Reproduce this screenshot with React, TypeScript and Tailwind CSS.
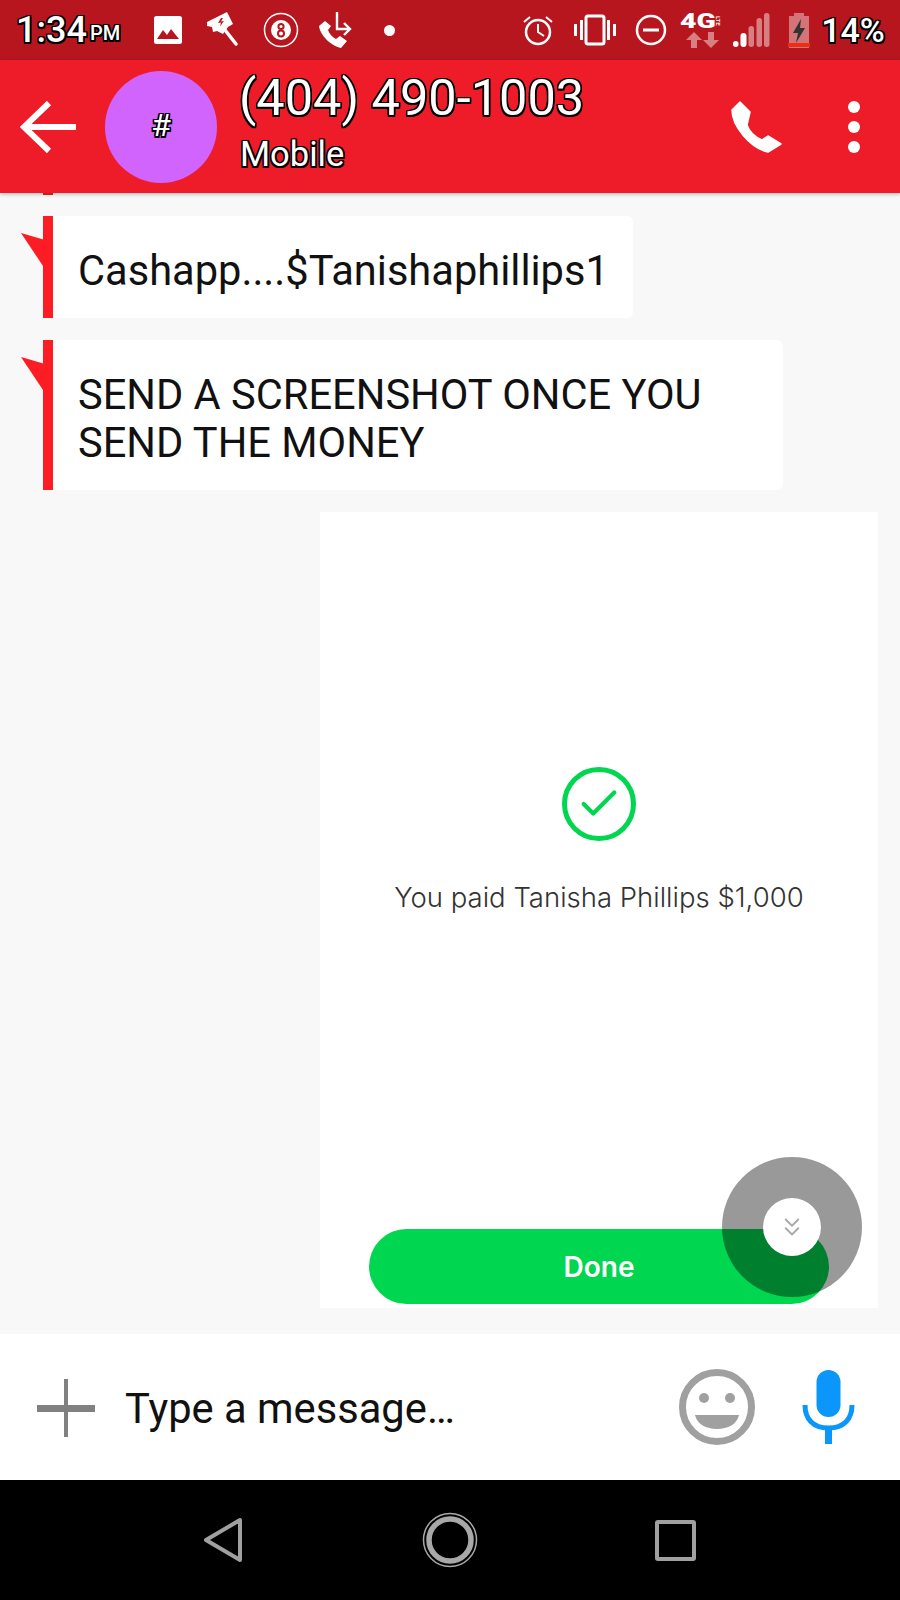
import { Check, ChevronsDown } from "lucide-react";

const outlined =
  "[text-shadow:-1.5px_-1.5px_0_#000,1.5px_-1.5px_0_#000,-1.5px_1.5px_0_#000,1.5px_1.5px_0_#000,0_1.5px_0_#000,0_-1.5px_0_#000,1.5px_0_0_#000,-1.5px_0_0_#000]";

function StatusBar() {
  return (
    <div className="flex h-[60px] items-center bg-[#b8161f] pl-4 text-white">
      <span className={`text-[36px] leading-none font-medium ${outlined}`}>1:34</span>
      <span className={`ml-[3px] mt-[6px] text-[20px] leading-none font-medium ${outlined}`}>PM</span>

      {/* gallery */}
      <svg className="ml-[33px]" width="30" height="30" viewBox="0 0 30 30">
        <rect x="1" y="1" width="28" height="28" rx="2.5" fill="#fff" />
        <path d="M4 24l6-9 4 5 4-6 8 10z" fill="#b8161f" />
      </svg>
      {/* hammer */}
      <svg className="ml-[23px]" width="34" height="36" viewBox="0 0 34 36">
        <path d="M1 10L21 0l6 12-5 3-5 7-6-3-4 1-1-5-5-1z" fill="#fff" />
        <path d="M15 6l-3 5 3-.5-1 4 4-5.500-3 .5 2-3.500z" fill="#b8161f" />
        <path d="M19 18l11 14" stroke="#fff" strokeWidth="3.500" strokeLinecap="round" />
      </svg>
      {/* 8 ball */}
      <svg className="ml-[23px]" width="36" height="36" viewBox="0 0 36 36">
        <circle cx="18" cy="18" r="16.500" fill="none" stroke="#fff" strokeWidth="1.500" />
        <circle cx="18" cy="18" r="10" fill="#fff" />
        <circle cx="18" cy="14.500" r="2.600" fill="none" stroke="#b8161f" strokeWidth="2" />
        <circle cx="18" cy="21.500" r="3" fill="none" stroke="#b8161f" strokeWidth="2" />
      </svg>
      {/* forwarded call */}
      <svg className="ml-[18px]" width="36" height="38" viewBox="0 0 36 38">
        <path d="M8 10L2 15c1 9 12 20 22 22l6-7-7-5-4 3c-4-2-7-6-8-9l3-4z" fill="#fff" />
        <path d="M20 1v17h13M27 12l6 6-6 6" fill="none" stroke="#fff" strokeWidth="2.400" />
      </svg>
      <div className="ml-[31px] h-[11px] w-[11px] rounded-full bg-white" />

      {/* alarm */}
      <svg className="ml-[127px]" width="32" height="32" viewBox="0 0 32 32" fill="none" stroke="#fff" strokeWidth="2.500">
        <circle cx="16" cy="18" r="12" />
        <path d="M16 10v8l6 4M2 8l6-5M30 8l-6-5" strokeWidth="2" />
      </svg>
      {/* vibrate */}
      <svg className="ml-[20px]" width="42" height="32" viewBox="0 0 42 32" fill="#fff">
        <rect x="12" y="2" width="18" height="28" rx="2" fill="none" stroke="#fff" strokeWidth="3" />
        <rect x="0" y="10" width="3" height="12" />
        <rect x="6" y="6" width="3" height="20" />
        <rect x="33" y="6" width="3" height="20" />
        <rect x="39" y="10" width="3" height="12" />
      </svg>
      {/* do not disturb */}
      <svg className="ml-[19px]" width="32" height="32" viewBox="0 0 32 32" fill="none" stroke="#fff">
        <circle cx="16" cy="16" r="14" strokeWidth="2.500" />
        <path d="M8 16h16" strokeWidth="3" />
      </svg>

      {/* network */}
      <div className="ml-[13px] flex h-[36px] w-[46px] flex-col">
        <div className="flex h-[17px] items-center justify-between">
          <span className="origin-left scale-x-[1.35] text-[21px] leading-[16px] font-black">4G</span>
          <span className="text-[6px] leading-[15px] font-bold [writing-mode:vertical-rl]">LTE</span>
        </div>
        <svg className="mt-[3px] ml-[6px]" width="33" height="16" viewBox="0 0 33 16" fill="#fff" fillOpacity="0.45">
          <path d="M8 0l8 8h-5v8H5V8H0zM25 16l8-8h-5V0h-6v8h-5z" />
        </svg>
      </div>
      {/* signal */}
      <svg className="ml-[7px]" width="37" height="36" viewBox="0 0 37 36" fill="#fff">
        <rect x="0" y="29" width="5.500" height="6" rx="2.700" />
        <rect x="7.500" y="21" width="6" height="14" rx="3" />
        <rect x="15.500" y="14" width="5.500" height="21" rx="2.700" fillOpacity="0.45" />
        <rect x="23.500" y="6" width="5.500" height="29" rx="2.700" fillOpacity="0.45" />
        <rect x="31" y="1" width="5.500" height="34" rx="2.700" fillOpacity="0.45" />
      </svg>
      {/* battery */}
      <svg className="ml-[17px]" width="24" height="36" viewBox="0 0 24 36">
        <path d="M7 1h10v3h5v32H2V4h5z" fill="#fff" fillOpacity="0.4" />
        <path d="M14 7L6 21h5l-2 10 9-15h-5z" fill="#333" />
        <rect x="1" y="31" width="22" height="4" fill="#ee2d12" />
      </svg>
      <span className={`ml-[10px] text-[34px] leading-none font-medium ${outlined}`}>14%</span>
    </div>
  );
}

function Header() {
  return (
    <div className="relative z-10 flex h-[133px] items-center bg-[#ed1c28] text-white shadow-[0_1px_4px_rgba(0,0,0,0.3)]">
      <svg className="ml-[20px]" width="56" height="52" viewBox="0 0 56 52" fill="none" stroke="#fff" strokeWidth="6">
        <path d="M56 26H4M29 2L4 26l25 24" />
      </svg>
      <div className="ml-[29px] flex h-[112px] w-[112px] items-center justify-center rounded-full bg-[#d164fd]">
        <span className={`mb-[3px] text-[32px] leading-none ${outlined}`}>#</span>
      </div>
      <div className="mb-[6px] ml-[22px] flex flex-col">
        <span className={`text-[50.500px] leading-[60px] ${outlined}`}>(404) 490-1003</span>
        <span className={`ml-[1px] text-[34.500px] leading-[52px] ${outlined}`}>Mobile</span>
      </div>
      <svg className="ml-auto" width="54" height="54" viewBox="0 0 54 54" fill="#fff">
        <path d="M10 2L2 10c0 16 18 38 36 42l13-8-13-8-6 4c-7-3-13-9-15-15l3-13z" strokeLinejoin="round" stroke="#fff" strokeWidth="1.500" />
      </svg>
      <div className="mr-[40px] ml-[64px] flex flex-col gap-2">
        <div className="h-3 w-3 rounded-full bg-white" />
        <div className="h-3 w-3 rounded-full bg-white" />
        <div className="h-3 w-3 rounded-full bg-white" />
      </div>
    </div>
  );
}

function Bubble({ text, width, height }: { text: string; width: string; height: string }) {
  return (
    <div className={`relative ml-[43px] flex flex-col justify-center rounded-r-md border-l-[10px] border-[#fb1c24] bg-white pt-[8px] pl-[25px] ${width} ${height}`}>
      <svg className="absolute top-[17px] -left-[32px]" width="24" height="36" viewBox="0 0 24 36">
        <path d="M0 0l24 7v29z" fill="#fb1c24" />
      </svg>
      <p className="text-[41.600px] leading-[48px] text-[#111]">{text}</p>
    </div>
  );
}

function PaymentCard() {
  return (
    <div className="mr-[22px] flex h-[796px] w-[558px] flex-col items-center self-end bg-white pt-[255px]">
      <div className="flex h-[74px] w-[74px] items-center justify-center rounded-full border-[5px] border-[#00d64f]">
        <Check size={46} strokeWidth={2.2} color="#00d64f" />
      </div>
      <p className="mt-[39px] font-['Inter',sans-serif] text-[27.500px] leading-[34px] font-light text-[#333]">
        You paid Tanisha Phillips $1,000
      </p>
      <button className="mt-auto mb-[4px] h-[75px] w-[460px] rounded-full bg-[#00d64f] font-['Inter',sans-serif] text-[28px] font-semibold text-white">
        Done
      </button>
    </div>
  );
}

function MessageBar() {
  return (
    <div className="flex h-[146px] items-center bg-white">
      <svg className="mt-[2px] ml-[37px]" width="58" height="58" viewBox="0 0 58 58" fill="#808080">
        <rect x="27" y="0" width="4" height="58" />
        <rect x="0" y="26" width="58" height="7" />
      </svg>
      <span className="mt-[3px] ml-[30px] text-[41.700px] leading-none text-[#111]">Type a message…</span>
      <svg className="mr-[47px] ml-auto" width="76" height="76" viewBox="0 0 76 76">
        <circle cx="38" cy="38" r="34.500" fill="none" stroke="#a0a0a0" strokeWidth="7" />
        <circle cx="25" cy="29" r="5" fill="#a0a0a0" />
        <circle cx="51" cy="29" r="5" fill="#a0a0a0" />
        <path d="M16 46h44c-2 9-11 14-22 14s-20-5-22-14z" fill="#a0a0a0" />
      </svg>
      <svg className="mr-[45px]" width="53" height="74" viewBox="0 0 53 74" fill="#0a96fb">
        <rect x="14.500" y="0" width="24" height="47" rx="12" />
        <path d="M3 35c0 14 8 23 23.500 23S50 49 50 35" fill="none" stroke="#0a96fb" strokeWidth="5" />
        <rect x="23" y="56" width="7" height="18" />
      </svg>
    </div>
  );
}

function NavBar() {
  return (
    <div className="flex h-[120px] items-center bg-black">
      <svg className="ml-[203px]" width="40" height="46" viewBox="0 0 40 46" fill="none" stroke="#a0a0a0" strokeWidth="4" strokeLinejoin="round">
        <path d="M37 3v40L3 23z" />
      </svg>
      <svg className="ml-[179px]" width="56" height="56" viewBox="0 0 56 56" fill="none" stroke="#a8a8a8">
        <circle cx="28" cy="28" r="26.500" strokeWidth="1.500" />
        <circle cx="28" cy="28" r="21" strokeWidth="5.500" />
      </svg>
      <div className="ml-[177px] h-[41px] w-[41px] rounded-[3px] border-[4px] border-[#a0a0a0]" />
    </div>
  );
}

export default function App() {
  return (
    <div className="relative flex h-[1600px] w-[900px] flex-col overflow-hidden bg-[#f8f8f8] font-['Roboto',sans-serif]">
      <StatusBar />
      <Header />
      <div className="flex flex-1 flex-col gap-[22px]">
        <div className="-mb-[1px] ml-[43px] h-[2px] w-[10px] bg-[#fb1c24]" />
        <Bubble text="Cashapp....$Tanishaphillips1" width="w-[590px]" height="h-[102px]" />
        <Bubble text="SEND A SCREENSHOT ONCE YOU SEND THE MONEY" width="w-[740px]" height="h-[150px]" />
        <PaymentCard />
      </div>
      <MessageBar />
      <NavBar />

      {/* floating assistive button */}
      <div className="absolute top-[1157px] left-[722px] flex h-[140px] w-[140px] items-center justify-center rounded-full bg-black/40">
        <div className="flex h-[58px] w-[58px] items-center justify-center rounded-full bg-white">
          <ChevronsDown size={30} strokeWidth={1.5} color="#aaa" />
        </div>
      </div>
    </div>
  );
}
